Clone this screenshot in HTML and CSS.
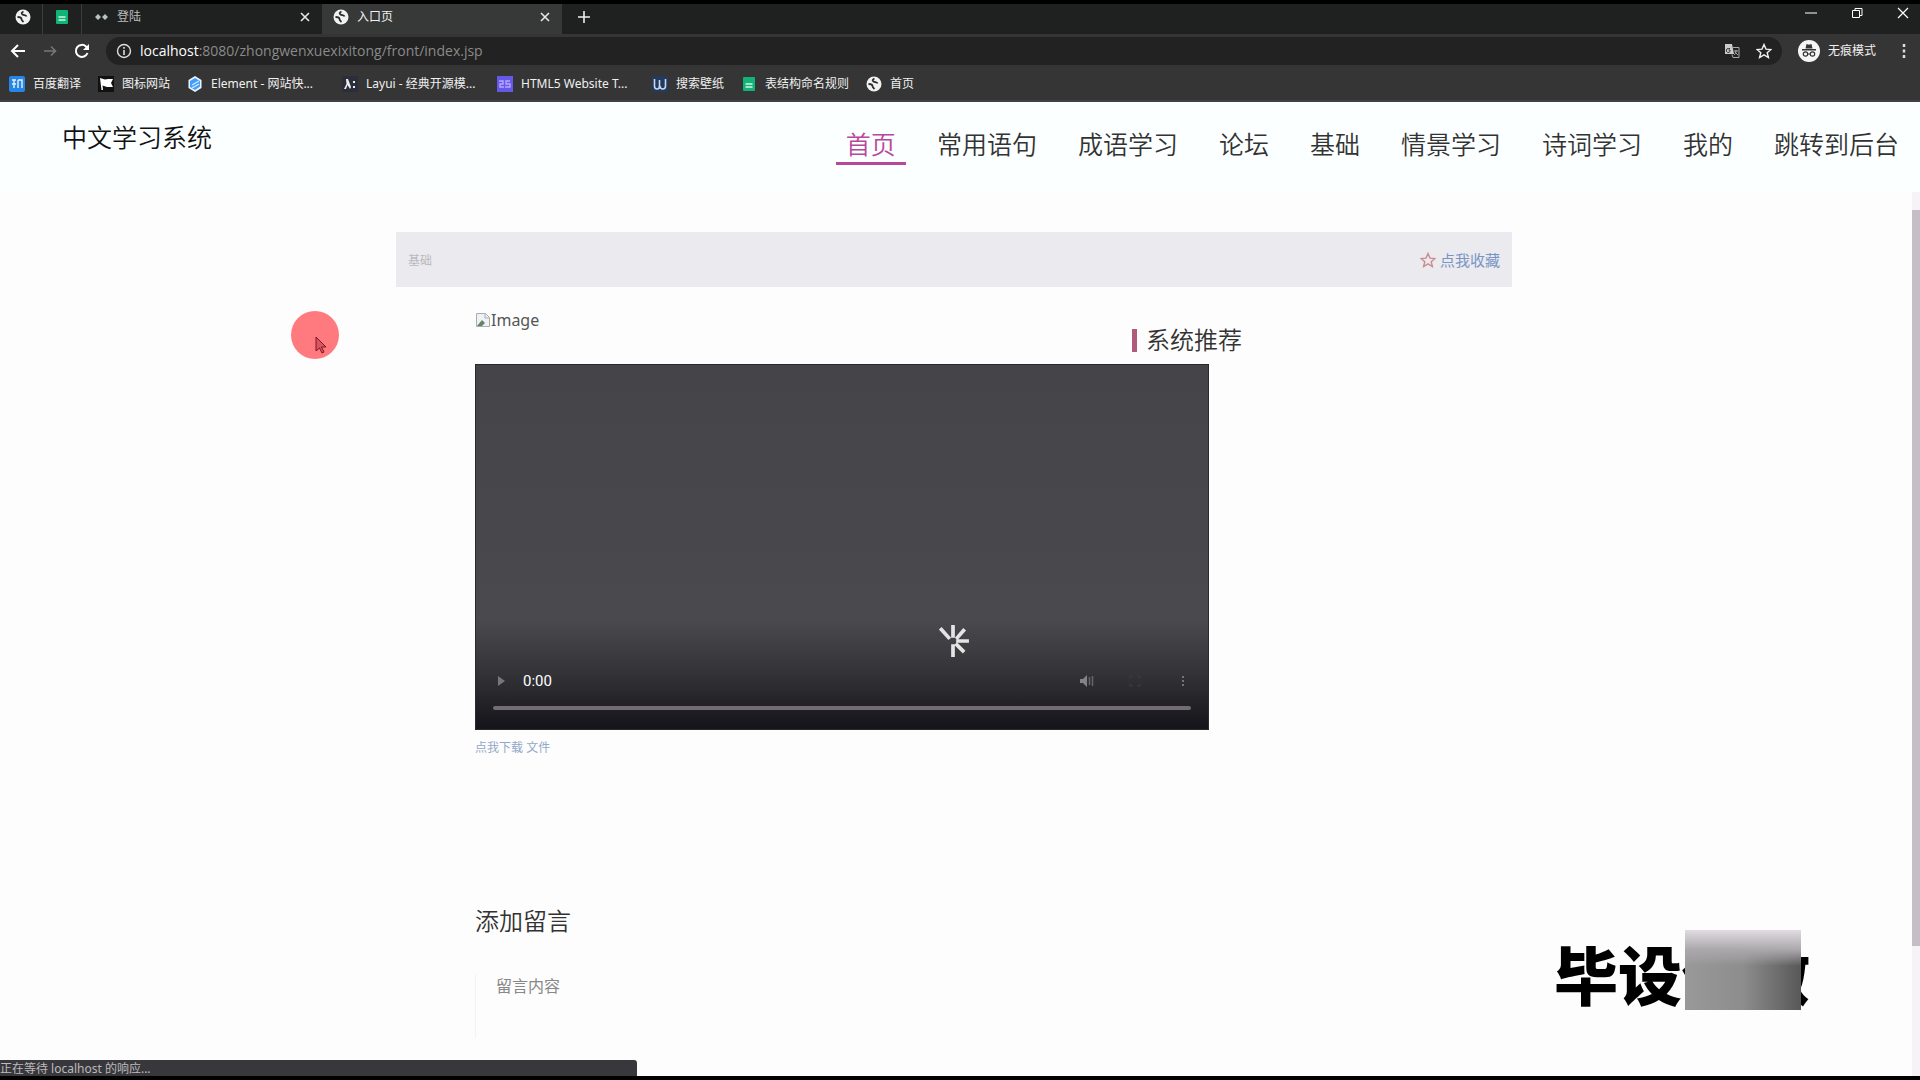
FILE: index.html
```
<!DOCTYPE html>
<html lang="zh-CN">
<head>
    <meta charset="UTF-8">
    <meta name="viewport" content="width=device-width, initial-scale=1.0">
    <title>入口页</title>
    <link rel="stylesheet" href="styles.css">
</head>
<body>
    <!-- 图标 -->
    <svg class="defs" width="0" height="0">
        <symbol id="globe" viewBox="0 0 16 16">
            <circle cx="8" cy="8" r="7.5" fill="#f1f1f1"/>
            <path d="M8.500 2.500c-2 1-2.500 2-1 3s3.500 0 4 2M2.500 8c2 0 4 .5 4 2s1 2 2 3" fill="none" stroke="#2b2b2b" stroke-width="1.800"/>
        </symbol>
        <symbol id="sheet" viewBox="0 0 16 16">
            <rect x="2" y="1" width="12" height="14" rx="1" fill="#10b477"/>
            <path d="M4.500 8h7M4.500 11h7" stroke="#d5f5e6" stroke-width="1.500"/>
        </symbol>
        <symbol id="cross" viewBox="0 0 16 16">
            <path d="M4 4l8 8M12 4l-8 8" stroke="#e8e8e8" stroke-width="1.600"/>
        </symbol>
        <symbol id="star" viewBox="0 0 16 16">
            <path d="M8 1.500l2 4.600 5 .4-3.800 3.200 1.200 4.800L8 11.900l-4.400 2.600 1.200-4.800L1 6.500l5-.4z" fill="none" stroke="currentColor" stroke-width="1.400"/>
        </symbol>
    </svg>

    <div class="browser">
        <div class="tabs">
            <div class="pin"><svg class="icon"><use href="#globe"/></svg></div>
            <div class="pin"><svg class="icon"><use href="#sheet"/></svg></div>
            <div class="tab">
                <svg class="icon" viewBox="0 0 16 16"><path d="M2 8l3-3 3 3-3 3zM9 8l3-3 3 3-3 3z" fill="#b9c2c0"/></svg>
                <span>登陆</span>
                <button aria-label="关闭"><svg class="icon"><use href="#cross"/></svg></button>
            </div>
            <div class="tab active">
                <svg class="icon"><use href="#globe"/></svg>
                <span>入口页</span>
                <button aria-label="关闭"><svg class="icon"><use href="#cross"/></svg></button>
            </div>
            <button class="new-tab" aria-label="新标签页"><svg class="icon" viewBox="0 0 16 16"><path d="M8 2v12M2 8h12" stroke="#eee" stroke-width="1.600"/></svg></button>
            <div class="window">
                <button aria-label="最小化"><svg class="icon" viewBox="0 0 16 16"><path d="M2 8h12" stroke="#fff"/></svg></button>
                <button aria-label="还原"><svg class="icon" viewBox="0 0 16 16"><path d="M3.500 5.500h7v7h-7zM6 5V3.500h7v7h-2" fill="none" stroke="#fff"/></svg></button>
                <button aria-label="关闭窗口"><svg class="icon" viewBox="0 0 16 16"><path d="M3 3l10 10M13 3L3 13" stroke="#fff" stroke-width="1.200"/></svg></button>
            </div>
        </div>

        <div class="toolbar">
            <button aria-label="后退"><svg class="icon" viewBox="0 0 16 16"><path d="M15 8H2.500M8 2L2 8l6 6" fill="none" stroke="#fff" stroke-width="2"/></svg></button>
            <button aria-label="前进"><svg class="icon" viewBox="0 0 16 16"><path d="M2 8h11M9 3.500L13.500 8 9 12.500" fill="none" stroke="#777" stroke-width="1.600"/></svg></button>
            <button aria-label="刷新"><svg class="icon" viewBox="0 0 16 16"><path d="M13.500 10A6 6 0 1 1 12 3.500L14 5.500" fill="none" stroke="#fff" stroke-width="2"/><path d="M15 1v6H9z" fill="#fff"/></svg></button>
            <div class="address">
                <svg class="icon" viewBox="0 0 16 16"><circle cx="8" cy="8" r="6.500" fill="none" stroke="#ddd" stroke-width="1.400"/><path d="M8 7v5M8 4v1.800" stroke="#ddd" stroke-width="1.600"/></svg>
                <span class="url"><b>localhost</b>:8080/zhongwenxuexixitong/front/index.jsp</span>
                <button aria-label="翻译"><svg class="icon" viewBox="0 0 16 16"><path d="M1 1h7l2 10H1z" fill="#ccc"/><path d="M6 5.500H4.500a2 2 0 1 0 1.500 3V7H4.500" fill="none" stroke="#333"/><path d="M9 4.500h6v10H9l-1-3M10 8h4M12 7v1c0 2-1 3-2 4M11 9l3 3" fill="none" stroke="#aaa"/></svg></button>
                <button aria-label="收藏此页"><svg class="icon"><use href="#star"/></svg></button>
            </div>
            <div class="incognito">
                <svg viewBox="0 0 22 22"><circle cx="11" cy="11" r="11" fill="#f5f5f5"/><path d="M7.500 8.500L8.500 4l2.500.8 2.500-.8 1 4.500zM4 9h14v1.500H4z" fill="#333"/><path d="M9.500 14h3" stroke="#333"/><circle cx="7.500" cy="14" r="2.200" fill="none" stroke="#333" stroke-width="1.200"/><circle cx="14.500" cy="14" r="2.200" fill="none" stroke="#333" stroke-width="1.200"/></svg>
                <span>无痕模式</span>
            </div>
            <button aria-label="菜单"><svg class="icon" viewBox="0 0 16 16"><path d="M8 1v3M8 6.500v3M8 12v3" stroke="#ddd" stroke-width="2.500"/></svg></button>
        </div>

        <div class="bookmarks">
            <a href="#"><svg class="icon" viewBox="0 0 16 16"><rect width="16" height="16" rx="2" fill="#2586e8"/><path d="M3 4h4M5 4v8M3 8h4M9 4h4v8M9 4v8" fill="none" stroke="#e4f1ff" stroke-width="1.400"/></svg>百度翻译</a>
            <a href="#"><svg class="icon" viewBox="0 0 16 16"><rect width="16" height="16" fill="#111"/><path d="M2 2l5 1.500 3-.5h5l-2 4 2 4H9L4.500 9.500 5 14H3.500z" fill="#fff"/></svg>图标网站</a>
            <a href="#" class="wide"><svg class="icon" viewBox="0 0 16 16"><path d="M8 0l6.500 4v8L8 16l-6.500-4V4z" fill="#eaf5ff"/><path d="M8 2l5 3v5.500L8 14l-5-3V5z" fill="#409eff"/><path d="M5 9l7-4M5 12l7-4" stroke="#d8ecff" stroke-width="1.200"/></svg>Element - 网站快...</a>
            <a href="#" class="wide"><svg class="icon" viewBox="0 0 16 16"><rect width="16" height="16" fill="#2b2d3b"/><path d="M4 3h2l3 8-1 2-2.500-4L4 13H2l2.500-5zM11 5h2v2h-2zM11 10h2v2h-2z" fill="#eee"/></svg>Layui - 经典开源模...</a>
            <a href="#" class="wide"><svg class="icon" viewBox="0 0 16 16"><rect width="16" height="16" fill="#6459e8"/><path d="M2 5h4v3H3v3h4M13 5H9v3h4v3H8" fill="none" stroke="#b9a8ff" stroke-width="1.400"/></svg>HTML5 Website T...</a>
            <a href="#"><svg class="icon" viewBox="0 0 16 16"><rect width="16" height="16" fill="#233a5e"/><path d="M2.500 3v7c0 4 5 4 5 0V4M8 10c0 4 5.500 4 5.500 0V3" fill="none" stroke="#c8d7ee" stroke-width="1.600"/></svg>搜索壁纸</a>
            <a href="#"><svg class="icon"><use href="#sheet"/></svg>表结构命名规则</a>
            <a href="#"><svg class="icon"><use href="#globe"/></svg>首页</a>
        </div>
    </div>

    <header class="header">
        <h1>中文学习系统</h1>
        <nav>
            <a href="#" class="active">首页</a>
            <a href="#">常用语句</a>
            <a href="#">成语学习</a>
            <a href="#">论坛</a>
            <a href="#">基础</a>
            <a href="#">情景学习</a>
            <a href="#">诗词学习</a>
            <a href="#">我的</a>
            <a href="#">跳转到后台</a>
        </nav>
    </header>

    <div class="page">
        <main class="container">
            <div class="title-bar">
                <span>基础</span>
                <a href="#"><svg class="icon"><use href="#star"/></svg><span>点我收藏</span></a>
            </div>

            <div class="detail">
                <div class="left">
                    <div class="picture">
                        <svg class="icon" viewBox="0 0 16 16"><path d="M1.500 1.500h9l4 4v9h-13z" fill="#eef2f5" stroke="#a9adb3"/><path d="M2 14l5-6 3 3-3 3z" fill="#65836c"/><path d="M10 2v4h4" fill="none" stroke="#a9adb3"/></svg><span>Image</span>
                    </div>
                    <div class="video">
                        <svg class="loading" viewBox="0 0 32 32"><path d="M16 13V1M13 14L4 4M19 14L27 5M19 16h12M18.500 18.500l8 8M16 19v12" stroke="#e4e4e4" stroke-width="3.500"/></svg>
                        <div class="controls">
                            <button aria-label="播放"><svg class="icon" viewBox="0 0 16 16"><path d="M5 3l7 5-7 5z" fill="#77767b"/></svg></button>
                            <span class="time">0:00</span>
                            <button aria-label="静音"><svg class="icon" viewBox="0 0 16 16"><path d="M1 6h3l4-4v12l-4-4H1z" fill="#858389"/><path d="M10.500 4v8M13.500 3v10" stroke="#67656b" stroke-width="1.500"/></svg></button>
                            <button aria-label="全屏"><svg class="icon" viewBox="0 0 16 16"><path d="M3 6V3h3M10 3h3v3M13 10v3h-3M6 13H3v-3" fill="none" stroke="#443b41"/></svg></button>
                            <button aria-label="更多"><svg class="icon" viewBox="0 0 16 16"><path d="M8 3v2M8 7v2M8 11v2" stroke="#77717a" stroke-width="2"/></svg></button>
                        </div>
                        <div class="progress"></div>
                    </div>
                    <p class="download"><a href="#">点我下载</a> <a href="#">文件</a></p>
                </div>
                <aside>
                    <h2>系统推荐</h2>
                </aside>
            </div>

            <section class="message">
                <h2><label for="content">添加留言</label></h2>
                <textarea id="content" placeholder="留言内容"></textarea>
            </section>
        </main>
        <div class="scrollbar"><div class="thumb"></div></div>
    </div>

    <div class="pointer">
        <svg viewBox="0 0 12 18"><path d="M1 1v14l3.500-3 2.500 5 2-1-2.500-5H11z" fill="#d95560" stroke="#7c1620"/></svg>
    </div>
    <div class="watermark">毕设代做<div class="mosaic"></div></div>
    <div class="status">正在等待 localhost 的响应...</div>
</body>
</html>
```
FILE: styles.css
```
* {
    box-sizing: border-box;
    margin: 0;
    padding: 0;
}

body {
    display: flex;
    flex-direction: column;
    height: 100vh;
    overflow: hidden;
    background-color: #fdfdfd;
    border-bottom: 4px solid #000;
    font-family: "Noto Sans", "Noto Sans CJK SC", sans-serif;
    font-size: 16px;
    color: #333;
}

a {
    color: inherit;
    text-decoration: none;
}

button {
    display: flex;
    background: none;
    border: none;
    color: inherit;
}

.defs {
    position: absolute;
}

.icon {
    flex: none;
    width: 16px;
    height: 16px;
}

/* 浏览器顶部 */
.browser {
    flex: none;
    background-color: #353535;
    border-bottom: 2px solid #3d4242;
    color: #f0f0f0;
    font-size: 12px;
    line-height: 16px;
}

.tabs {
    display: flex;
    height: 34px;
    background-color: #1f2121;
    border-top: 4px solid #000;
}

.pin {
    display: flex;
    align-items: center;
    width: 42px;
    padding: 0 0 4px 15px;
}

.pin + .pin {
    width: 40px;
    padding-left: 11px;
    border-right: 1px solid #3a3d3d;
    border-left: 1px solid #3a3d3d;
}

.tab {
    display: flex;
    align-items: center;
    gap: 8px;
    width: 240px;
    padding: 0 9px 4px 11px;
    color: #bbb;
}

.tab span {
    flex: 1;
}

.tab.active {
    background-color: #373838;
    color: #f0f0f0;
}

.new-tab {
    align-items: center;
    padding: 0 14px 4px;
}

.window {
    display: flex;
    gap: 30px;
    margin-left: auto;
    padding: 1px 9px;
}

.toolbar {
    display: flex;
    align-items: center;
    gap: 16px;
    height: 34px;
    padding: 0 8px 0 10px;
}

.address {
    display: flex;
    flex: 1;
    align-items: center;
    gap: 16px;
    height: 28px;
    padding: 0 10px;
    border-radius: 14px;
    background-color: #222;
}

.address .url {
    flex: 1;
    margin-left: -8px;
    color: #8a8a8a;
    font-family: "Open Sans", "Noto Sans", sans-serif;
    font-size: 14px;
}

.address b {
    color: #fff;
    font-weight: 400;
}

.incognito {
    display: flex;
    align-items: center;
    gap: 8px;
    margin-right: 4px;
}

.incognito svg {
    width: 22px;
    height: 22px;
}

.bookmarks {
    display: flex;
    align-items: center;
    gap: 17px;
    height: 32px;
    padding-left: 9px;
}

.bookmarks a {
    display: flex;
    gap: 8px;
}

.bookmarks .wide {
    width: 138px;
}

/* 导航 */
.header {
    display: flex;
    flex: none;
    justify-content: space-between;
    height: 90px;
    padding: 16px 11px 0 62px;
    background-color: #fcffff;
}

.header h1 {
    color: #111;
    font-size: 25px;
    font-weight: 350;
    line-height: 38px;
}

nav {
    display: flex;
    align-items: flex-start;
    gap: 21px;
    padding-top: 8px;
}

nav a {
    padding: 0 10px;
    border-bottom: 3px solid transparent;
    font-size: 25px;
    font-weight: 350;
    line-height: 36px;
    white-space: nowrap;
}

nav a.active {
    border-color: #b8479a;
    color: #b8479a;
}

/* 内容 */
.page {
    display: flex;
    flex: 1;
    min-height: 0;
}

.container {
    width: 1116px;
    margin: 0 auto;
    padding-top: 40px;
}

.title-bar {
    display: flex;
    align-items: center;
    justify-content: space-between;
    height: 55px;
    padding: 0 12px;
    background-color: #ebeaee;
    color: #b9b9bf;
    font-size: 12px;
}

.title-bar a {
    display: flex;
    align-items: center;
    gap: 4px;
    color: #7896c4;
    font-size: 15px;
}

.title-bar .icon {
    color: #c98c91;
}

.detail {
    display: grid;
    grid-template-columns: 657px 1fr;
    padding: 21px 79px 0;
}

.picture {
    display: flex;
    align-items: center;
    height: 24px;
    margin-bottom: 32px;
    color: #555;
}

.video {
    position: relative;
    display: flex;
    flex-direction: column;
    justify-content: flex-end;
    width: 734px;
    height: 366px;
    padding: 0 17px 19px;
    border: 1px solid #2a292e;
    background: linear-gradient(#454449 0%, #4a494e 70%, #333237 85%, #15141a 100%);
}

.loading {
    position: absolute;
    top: 258px;
    left: 460px;
    width: 34px;
    height: 36px;
}

.controls {
    display: flex;
    align-items: center;
    gap: 32px;
    height: 32px;
    margin-bottom: 9px;
    color: #fff;
}

.controls .time {
    flex: 1;
    margin-left: -18px;
    font-family: Roboto, sans-serif;
    font-size: 15px;
}

.progress {
    height: 4px;
    border-radius: 2px;
    background-color: #726c74;
}

.download {
    margin-top: 8px;
    color: #91a9c6;
    font-size: 12px;
    line-height: 20px;
}

aside {
    padding-top: 14px;
}

h2 {
    font-size: 24px;
    font-weight: 350;
    line-height: 36px;
}

aside h2 {
    display: flex;
    align-items: center;
    gap: 9px;
}

aside h2::before {
    content: "";
    width: 5px;
    height: 23px;
    background-color: #b05a7c;
}

.message {
    padding: 145px 79px 0;
}

.message textarea {
    display: block;
    width: 100%;
    height: 64px;
    margin-top: 35px;
    padding: 0 20px;
    border: none;
    border-left: 1px solid #f3f2fb;
    background: none;
    font: inherit;
    line-height: 24px;
    resize: none;
}

.message textarea::placeholder {
    color: #888;
}

.scrollbar {
    width: 8px;
    margin-left: 4px;
    padding-top: 18px;
    background-color: #f7f2f8;
}

.thumb {
    height: 85%;
    background-color: #c5bec7;
}

/* 浮层 */
.pointer {
    position: absolute;
    top: 311px;
    left: 291px;
    width: 48px;
    height: 48px;
    padding: 25px 0 0 24px;
    border-radius: 50%;
    background-color: #ff7a7f;
}

.pointer svg {
    display: block;
    width: 12px;
    height: 18px;
}

.watermark {
    position: absolute;
    right: 110px;
    bottom: 76px;
    color: #000;
    font-family: "Noto Sans CJK SC", sans-serif;
    font-size: 64px;
    font-weight: 900;
    line-height: 64px;
}

.mosaic {
    position: absolute;
    top: -10px;
    left: 131px;
    width: 116px;
    height: 80px;
    background: linear-gradient(#e0dce1 0%, #aaa7ab 25%, transparent 45%), linear-gradient(90deg, #999 0%, #8d8d8d 50%, #585858 100%);
}

.status {
    position: absolute;
    bottom: 4px;
    left: 0;
    width: 637px;
    height: 16px;
    overflow: hidden;
    border-top-right-radius: 3px;
    background-color: #38373c;
    color: #bbb;
    font-size: 12px;
    line-height: 18px;
}
```
